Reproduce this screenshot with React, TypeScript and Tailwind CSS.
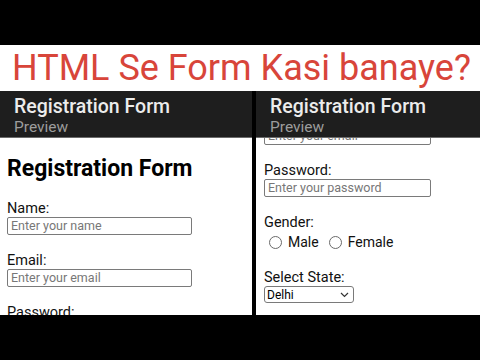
import React from "react";

const font = { fontFamily: "Roboto, 'Noto Sans', sans-serif" };

function Header() {
  return (
    <div className="relative z-10 h-[47px] shrink-0 bg-[#1e1e1e] pl-[14px] pt-[4px] border-b border-[#6b6b6b]">
      <div className="text-[19.5px] leading-[23px] font-medium text-[#ececec] whitespace-nowrap">Registration Form</div>
      <div className="text-[15.5px] leading-[18px] text-[#9c9c9c]">Preview</div>
    </div>
  );
}

function Field({ label, placeholder, w }: { label: string; placeholder: string; w: string }) {
  return (
    <div className="flex flex-col mb-[17px]">
      <div className="text-[14.5px] leading-[17px] text-[#111]">{label}</div>
      <div className={`${w} h-[18px] border border-[#7a7a7a] rounded-[2px] pl-[3px] text-[12.5px] leading-[16px] text-[#777]`}>
        {placeholder}
      </div>
    </div>
  );
}

function Radio({ label }: { label: string }) {
  return (
    <div className="flex items-center">
      <div className="w-[13px] h-[13px] rounded-full border border-[#6a6a6a] bg-white" />
      <span className="ml-[6px] text-[14px] leading-[17px] text-[#111]">{label}</span>
    </div>
  );
}

export default function App() {
  return (
    <div className="w-[480px] h-[360px] bg-black overflow-hidden flex flex-col" style={font}>
      <div className="h-[45px] shrink-0 bg-black" />
      <div className="h-[46px] shrink-0 bg-white pl-[12px] flex items-center">
        <span className="text-[36px] leading-[40px] text-[#d8453a] whitespace-nowrap">HTML Se Form Kasi banaye?</span>
      </div>
      <div className="h-[224px] shrink-0 flex bg-black">
        <div className="w-[252px] h-full bg-white flex flex-col overflow-hidden">
          <Header />
          <div className="pl-[7px] pt-[18px]">
            <div className="text-[23px] leading-[26px] font-bold text-black mb-[18px] whitespace-nowrap">Registration Form</div>
            <Field label="Name:" placeholder="Enter your name" w="w-[185px]" />
            <Field label="Email:" placeholder="Enter your email" w="w-[185px]" />
            <Field label="Password:" placeholder="Enter your password" w="w-[185px]" />
          </div>
        </div>
        <div className="w-[4px] h-full bg-black" />
        <div className="flex-1 h-full bg-white flex flex-col overflow-hidden">
          <Header />
          <div className="pl-[8px] -mt-[11px]">
            <div className="w-[167px] h-[18px] border border-[#7a7a7a] rounded-[2px] pl-[3px] text-[12.5px] leading-[16px] text-[#777] mb-[17px]">
              Enter your email
            </div>
            <Field label="Password:" placeholder="Enter your password" w="w-[167px]" />
            <div className="flex flex-col mb-[16px]">
              <div className="text-[14.5px] leading-[17px] text-[#111]">Gender:</div>
              <div className="h-[22px] flex items-center pl-[5px] gap-[10px]">
                <Radio label="Male" />
                <Radio label="Female" />
              </div>
            </div>
            <div className="flex flex-col">
              <div className="text-[14.5px] leading-[17px] text-[#111]">Select State:</div>
              <div className="w-[90px] h-[17px] border border-[#7a7a7a] rounded-[3px] pl-[2px] pr-[4px] flex items-center justify-between text-[12px] text-black">
                <span>Delhi</span>
                <svg width="9" height="6" viewBox="0 0 9 6" fill="none">
                  <path d="M1 1l3.5 3.5L8 1" stroke="#333" strokeWidth="1.2" />
                </svg>
              </div>
            </div>
          </div>
        </div>
      </div>
      <div className="flex-1 bg-black" />
    </div>
  );
}
